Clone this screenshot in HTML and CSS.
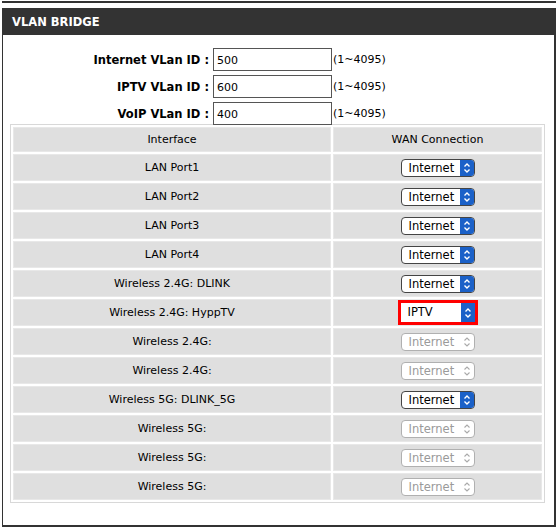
FILE: index.html
```html
<!DOCTYPE html>
<html>
<head>
<meta charset="utf-8">
<link rel="stylesheet" href="styles.css">
</head>
<body>
<div class="topline"></div>
<div class="box">
  <div class="header">VLAN BRIDGE</div>
  <div class="ids">
    <div class="idrow"><span class="lbl">Internet VLan ID :</span><span class="inp">500</span><span class="range">(1~4095)</span></div>
    <div class="idrow"><span class="lbl">IPTV VLan ID :</span><span class="inp">600</span><span class="range">(1~4095)</span></div>
    <div class="idrow"><span class="lbl">VoIP VLan ID :</span><span class="inp">400</span><span class="range">(1~4095)</span></div>
  </div>
  <table class="grid">
    <tr class="head"><td class="c1">Interface</td><td class="c2">WAN Connection</td></tr>
    <tr><td class="c1">LAN Port1</td><td class="c2"><span class="sel">Internet<span class="arr"><svg viewBox="0 0 8 12" width="8" height="12"><path d="M1.5 4.5 L4 2 L6.5 4.5 M1.5 7.5 L4 10 L6.5 7.5" fill="none" stroke="#fff" stroke-width="1.4"/></svg></span></span></td></tr>
    <tr><td class="c1">LAN Port2</td><td class="c2"><span class="sel">Internet<span class="arr"><svg viewBox="0 0 8 12" width="8" height="12"><path d="M1.5 4.5 L4 2 L6.5 4.5 M1.5 7.5 L4 10 L6.5 7.5" fill="none" stroke="#fff" stroke-width="1.4"/></svg></span></span></td></tr>
    <tr><td class="c1">LAN Port3</td><td class="c2"><span class="sel">Internet<span class="arr"><svg viewBox="0 0 8 12" width="8" height="12"><path d="M1.5 4.5 L4 2 L6.5 4.5 M1.5 7.5 L4 10 L6.5 7.5" fill="none" stroke="#fff" stroke-width="1.4"/></svg></span></span></td></tr>
    <tr><td class="c1">LAN Port4</td><td class="c2"><span class="sel">Internet<span class="arr"><svg viewBox="0 0 8 12" width="8" height="12"><path d="M1.5 4.5 L4 2 L6.5 4.5 M1.5 7.5 L4 10 L6.5 7.5" fill="none" stroke="#fff" stroke-width="1.4"/></svg></span></span></td></tr>
    <tr><td class="c1">Wireless 2.4G: DLINK</td><td class="c2"><span class="sel">Internet<span class="arr"><svg viewBox="0 0 8 12" width="8" height="12"><path d="M1.5 4.5 L4 2 L6.5 4.5 M1.5 7.5 L4 10 L6.5 7.5" fill="none" stroke="#fff" stroke-width="1.4"/></svg></span></span></td></tr>
    <tr><td class="c1">Wireless 2.4G: HyppTV</td><td class="c2"><span class="hl"><span class="sel sq">IPTV<span class="arr"><svg viewBox="0 0 8 12" width="8" height="12"><path d="M1.5 4.5 L4 2 L6.5 4.5 M1.5 7.5 L4 10 L6.5 7.5" fill="none" stroke="#fff" stroke-width="1.4"/></svg></span></span></span></td></tr>
    <tr><td class="c1">Wireless 2.4G:</td><td class="c2"><span class="sel dis">Internet<span class="arr"><svg viewBox="0 0 8 12" width="8" height="12"><path d="M1.5 4.5 L4 2 L6.5 4.5 M1.5 7.5 L4 10 L6.5 7.5" fill="none" stroke="#aaa" stroke-width="1.1"/></svg></span></span></td></tr>
    <tr><td class="c1">Wireless 2.4G:</td><td class="c2"><span class="sel dis">Internet<span class="arr"><svg viewBox="0 0 8 12" width="8" height="12"><path d="M1.5 4.5 L4 2 L6.5 4.5 M1.5 7.5 L4 10 L6.5 7.5" fill="none" stroke="#aaa" stroke-width="1.1"/></svg></span></span></td></tr>
    <tr><td class="c1">Wireless 5G: DLINK_5G</td><td class="c2"><span class="sel">Internet<span class="arr"><svg viewBox="0 0 8 12" width="8" height="12"><path d="M1.5 4.5 L4 2 L6.5 4.5 M1.5 7.5 L4 10 L6.5 7.5" fill="none" stroke="#fff" stroke-width="1.4"/></svg></span></span></td></tr>
    <tr><td class="c1">Wireless 5G:</td><td class="c2"><span class="sel dis">Internet<span class="arr"><svg viewBox="0 0 8 12" width="8" height="12"><path d="M1.5 4.5 L4 2 L6.5 4.5 M1.5 7.5 L4 10 L6.5 7.5" fill="none" stroke="#aaa" stroke-width="1.1"/></svg></span></span></td></tr>
    <tr><td class="c1">Wireless 5G:</td><td class="c2"><span class="sel dis">Internet<span class="arr"><svg viewBox="0 0 8 12" width="8" height="12"><path d="M1.5 4.5 L4 2 L6.5 4.5 M1.5 7.5 L4 10 L6.5 7.5" fill="none" stroke="#aaa" stroke-width="1.1"/></svg></span></span></td></tr>
    <tr><td class="c1">Wireless 5G:</td><td class="c2"><span class="sel dis">Internet<span class="arr"><svg viewBox="0 0 8 12" width="8" height="12"><path d="M1.5 4.5 L4 2 L6.5 4.5 M1.5 7.5 L4 10 L6.5 7.5" fill="none" stroke="#aaa" stroke-width="1.1"/></svg></span></span></td></tr>
  </table>
</div>
</body>
</html>
```
FILE: styles.css
```css
html, body {
  margin: 0;
  padding: 0;
  background: #fff;
  font-family: "DejaVu Sans", Verdana, sans-serif;
  font-size: 11px;
  color: #000;
}
.topline {
  margin: 1px 0 0 2px;
  width: 554px;
  height: 2px;
  background: #333;
}
.box {
  margin: 5px 0 0 2px;
  width: 551px;
  height: 517px;
  border-left: 1px solid #333;
  border-right: 2px solid #333;
  border-bottom: 2px solid #333;
  box-sizing: content-box;
}
.header {
  margin-left: -1px;
  margin-right: -2px;
  height: 27px;
  background: #333;
  color: #fff;
  font-weight: bold;
  font-size: 11.5px;
  line-height: 28px;
  padding-left: 10px;
}
.ids {
  padding-top: 13px;
  display: flex;
  flex-direction: column;
  gap: 4px;
}
.idrow {
  display: flex;
  align-items: center;
  height: 23px;
}
.lbl {
  width: 210px;
  text-align: right;
  font-weight: bold;
  font-size: 11.5px;
  padding-right: 4px;
  box-sizing: border-box;
}
.inp {
  width: 119px;
  height: 23px;
  box-sizing: border-box;
  border: 1px solid #555;
  padding: 5px 0 0 3px;
  font-size: 11px;
}
.range {
  padding-left: 1px;
  font-size: 11px;
}
.grid {
  margin: -1px 0 0 7px;
  width: 535px;
  border-collapse: separate;
  border-spacing: 2px;
  border: 1px solid #d8d8d8;
}
.grid td {
  background: #dfdfdf;
  height: 27px;
  padding: 0;
  text-align: center;
  box-sizing: border-box;
  border: 1px solid #e8e8e8;
  font-size: 11px;
}
.grid tr.head td {
  height: 25px;
}
.grid td.c1 {
  width: 318px;
}
.sel {
  display: inline-flex;
  align-items: center;
  justify-content: space-between;
  width: 74px;
  height: 18px;
  box-sizing: border-box;
  border: 1px solid #444;
  border-radius: 4px;
  background: #fff;
  padding-left: 7px;
  text-align: left;
  vertical-align: middle;
  overflow: hidden;
  font-size: 11.5px;
}
.arr {
  width: 15px;
  height: 18px;
  background: #1b61c8;
  display: flex;
  align-items: center;
  justify-content: center;
  margin-right: -1px;
}
.sel.dis {
  color: #9a9a9a;
  border-color: #b0b0b0;
}
.sel.dis .arr {
  background: transparent;
}
.hl {
  display: inline-block;
  border: 3px solid #f00;
  line-height: 0;
  vertical-align: middle;
}
.sel.sq {
  border-radius: 0;
  border: none;
  height: 19px;
  width: 74px;
  line-height: 19px;
}
.sel.sq .arr {
  height: 19px;
}
```
